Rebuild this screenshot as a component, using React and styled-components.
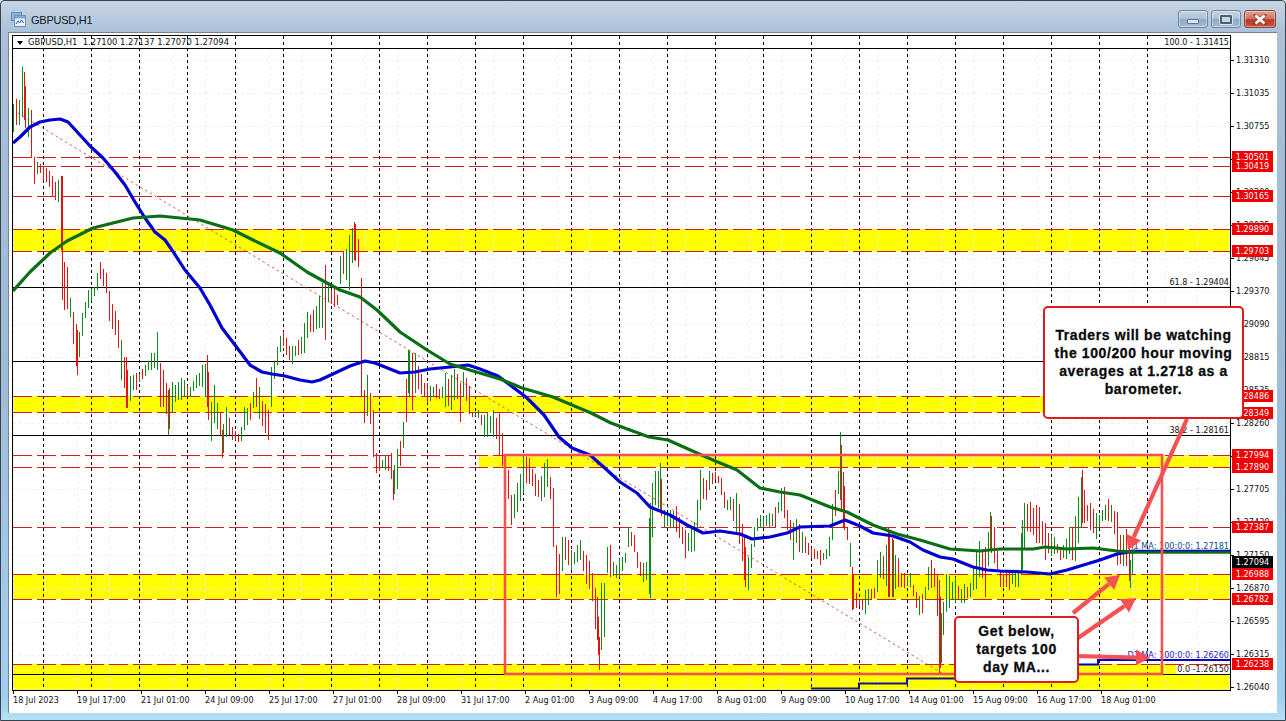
import React from "react";
import styled, { createGlobalStyle } from "styled-components";

const AXIS_FONT = `"DejaVu Sans Condensed", "DejaVu Sans", sans-serif`;

const GlobalStyle = createGlobalStyle`
  html, body { margin: 0; padding: 0; background: #fff; }
  body { font-family: "Liberation Sans", Arial, sans-serif; }
`;

const Window = styled.div`
  box-sizing: border-box;
  width: 1286px;
  height: 721px;
  display: flex;
  flex-direction: column;
  overflow: hidden;
  border: 1px solid #39434d;
  border-radius: 4px 4px 0 0;
  background: linear-gradient(180deg, #c6d5e4 0, #a9c0d8 4.5%, #9fbbd8 50%, #a3cfee 97%, #b5e0f5 100%);
`;

const TitleBar = styled.div`
  box-sizing: border-box;
  flex: 0 0 31px;
  display: flex;
  align-items: flex-start;
  padding: 9px 9px 0 10px;
`;

const TitleIcon = styled.svg`
  width: 15px;
  height: 16px;
  margin-top: 2px;
  flex: none;
`;

const TitleText = styled.span`
  margin: 3px 0 0 5px;
  font-size: 11px;
  line-height: 14px;
  letter-spacing: -0.25px;
  color: #10181f;
`;

const WindowButtons = styled.div`
  margin-left: auto;
  display: flex;
  gap: 3px;
`;

const WinButton = styled.div`
  box-sizing: border-box;
  width: ${(p) => (p.$close ? 32 : 30)}px;
  height: 18px;
  display: flex;
  align-items: center;
  justify-content: center;
  border: 1px solid ${(p) => (p.$close ? "#8a4a40" : "#74879c")};
  border-radius: 3px;
  box-shadow: inset 0 0 0 1px rgba(255, 255, 255, 0.35);
  background: ${(p) =>
    p.$close
      ? "linear-gradient(180deg, #e2a394 0, #cf7a68 45%, #b93a28 55%, #c4553f 100%)"
      : "linear-gradient(180deg, #c3d3e3 0, #adc3d9 45%, #8ea9c6 55%, #a4bdd6 100%)"};
`;

const MinGlyph = styled.span`
  width: 10px;
  height: 3px;
  margin-top: 4px;
  background: #dde6ee;
  border: 1px solid #5f7286;
  border-radius: 1px;
`;

const MaxGlyph = styled.span`
  box-sizing: border-box;
  width: 12px;
  height: 9px;
  background: #c7d5e2;
  border: 2px solid #4d6074;
  border-radius: 1px;
  box-shadow: 0 0 0 1px #dce6ef;
`;

const Client = styled.div`
  flex: 1;
  min-height: 0;
  box-sizing: border-box;
  margin: 0 8px 7px 7px;
  padding: 2px 0 0 3px;
  border-left: 1px solid #76848f;
  border-top: 1px solid #76848f;
  background: #fff;
`;

const ChartGrid = styled.div`
  display: grid;
  grid-template-columns: 1219px 46px;
  grid-template-rows: 656px 18px;
`;

const PlotFrame = styled.div`
  position: relative;
  box-sizing: border-box;
  width: 1219px;
  height: 656px;
  border: 1px solid #000;
`;

const PlotSvg = styled.svg`
  display: block;
  width: 1217px;
  height: 654px;
`;

const Legend = styled.div`
  position: absolute;
  left: 4px;
  top: 0;
  height: 12px;
  display: flex;
  align-items: center;
  font-family: ${AXIS_FONT};
  font-size: 9.3px;
  line-height: 12px;
  white-space: pre;
  color: #111;
`;

const LegendCaret = styled.span`
  width: 0;
  height: 0;
  margin: 1px 5px 0 0;
  border-left: 3.5px solid transparent;
  border-right: 3.5px solid transparent;
  border-top: 4px solid #000;
`;

const PriceAxis = styled.div`
  position: relative;
  display: flex;
  flex-direction: column;
  padding-top: 8.5px;
`;

const PriceTick = styled.div`
  position: relative;
  flex: 0 0 33.03px;
  line-height: 33.03px;
  padding-left: 5px;
  font-family: ${AXIS_FONT};
  font-size: 9px;
  color: #111;
  &::before {
    content: "";
    position: absolute;
    left: 0;
    top: 16px;
    width: 3px;
    height: 1px;
    background: #000;
  }
`;

const PriceBadge = styled.div`
  position: absolute;
  left: 1px;
  top: ${(p) => p.$y - 35 - 6}px;
  width: 41px;
  height: 12px;
  line-height: 12px;
  text-align: center;
  font-family: ${AXIS_FONT};
  font-size: 9px;
  color: #fff;
  background: ${(p) => (p.$dark ? "#000" : "#f00000")};
  z-index: ${(p) => (p.$dark ? 2 : 1)};
`;

const TimeAxis = styled.div`
  grid-column: 1 / 3;
  display: flex;
  padding-left: 1px;
`;

const TimeCell = styled.div`
  position: relative;
  flex: 0 0 64px;
  padding-top: 3px;
  line-height: 12px;
  font-family: ${AXIS_FONT};
  font-size: 9px;
  white-space: nowrap;
  color: #111;
  &::before {
    content: "";
    position: absolute;
    left: 0;
    top: 0;
    width: 1px;
    height: 3px;
    background: #000;
  }
`;

const Callout = styled.div`
  position: absolute;
  z-index: 5;
  left: ${(p) => p.$left}px;
  top: ${(p) => p.$top}px;
  width: ${(p) => p.$width}px;
  height: ${(p) => p.$height}px;
  box-sizing: border-box;
  display: flex;
  align-items: center;
  justify-content: center;
  text-align: center;
  padding-bottom: ${(p) => p.$shift}px;
  border: 2px solid #e01b1b;
  border-radius: 5px;
  background: #fff;
  color: #0a0a0a;
  font-family: "Liberation Sans", Arial, sans-serif;
  font-weight: 700;
  font-size: 14px;
  line-height: 18px;
  letter-spacing: 0.6px;
  -webkit-text-stroke: 0.3px #0a0a0a;
  white-space: nowrap;
`;

/* ---------- chart data (page coordinates) ---------- */

const VERT = Array.from({ length: 24 }, (_, i) => 43.5 + 48 * i);
const FAINT_V = Array.from({ length: 39 }, (_, i) => 13.5 + 32 * i);
const PRICES = ["1.31310","1.31035","1.30755","1.30480","1.30200","1.29925","1.29645","1.29370","1.29090","1.28815","1.28535","1.28260","1.27980","1.27705","1.27430","1.27150","1.26870","1.26595","1.26315","1.26040"];
const FAINT_H = PRICES.map((_, i) => Math.round(60 + i * 33.03) + 0.5);
const BANDS = [[229, 251, 13], [396, 412.5, 13], [455, 467, 479], [574, 599, 13], [664, 690, 13]];
const DASHED = [157, 166, 196, 229, 251, 396, 412.5, 455, 467, 527, 574, 599, 664];
const FIBS = [48, 287, 361, 435, 674];
const BADGES = [
  ["1.30501", 157], ["1.30419", 166], ["1.30165", 196], ["1.29890", 229], ["1.29703", 251],
  ["1.28486", 396], ["1.28349", 412.5], ["1.27994", 455], ["1.27890", 467], ["1.27387", 527],
  ["1.26988", 574], ["1.26782", 599], ["1.26238", 664],
];
const DATES = ["18 Jul 2023","19 Jul 17:00","21 Jul 01:00","24 Jul 09:00","25 Jul 17:00","27 Jul 01:00","28 Jul 09:00","31 Jul 17:00","2 Aug 01:00","3 Aug 09:00","4 Aug 17:00","8 Aug 01:00","9 Aug 09:00","10 Aug 17:00","14 Aug 01:00","15 Aug 09:00","16 Aug 17:00","18 Aug 01:00"];

const ENV = [
  [13,104,132],[15,90,127],[17,108,122],[19,100,125],[22,67,117],[24,72,120],[27,115,143],[29,100,130],[31,110,158],[34,157,184],[36,163,175],[38,160,172],[42,165,180],[46,168,182],[50,172,188],[53,178,200],[55,182,200],[58,180,202],[60,176,200],
  [62,176,300],[64,262,310],[68,268,308],[72,312,340],[74,312,347],[77,330,375],[80,333,348],[83,303,330],[88,290,308],[92,288,298],[96,280,297],[99,260,277],[102,267,283],[106,273,293],[110,297,330],[114,308,330],[118,320,348],[122,347,390],[126,357,408],[128,383,408],[131,373,397],[137,373,388],[144,367,377],[150,353,370],[154,353,368],[157,332,370],[160,363,407],[164,372,407],[168,390,435],[172,382,412],[177,383,400],[182,377,400],[190,387,397],[197,373,387],[203,363,387],[207,355,407],[210,407,447],[214,385,423],[220,412,435],[222,430,458],[226,407,437],[232,427,440],[240,433,444],[244,407,430],[250,403,420],[256,378,407],[260,390,423],[266,407,435],[268,410,440],[271,367,407],[275,360,370],[278,340,363],[282,330,343],[286,338,355],[291,347,365],[298,340,355],[303,327,358],[308,308,333],[314,310,332],[320,293,327],[325,265,340],[328,283,302],[333,287,307],[337,295,305],[341,243,277],[345,253,277],[349,235,290],[354,222,260],[357,228,262],[360,260,278],
  [361,278,397],[364,390,423],[368,370,413],[373,410,457],[376,453,473],[380,457,470],[385,455,470],[392,453,480],[393,470,500],[395,460,488],[398,443,489],[402,437,453],[405,393,437],[408,350,393],[412,353,410],[415,353,393],[420,373,393],[427,383,403],[435,383,397],[440,390,400],[445,373,407],[450,377,413],[455,367,397],[460,383,422],[463,372,397],[468,377,413],[472,412,417],[478,410,418],[483,415,437],[488,413,437],[493,410,437],[497,420,440],[499,412,455],
  [503,440,470],[507,462,490],[511,495,525],[513,497,520],[518,480,510],[524,450,490],[530,460,483],[534,473,495],[540,480,502],[544,463,497],[548,457,483],[553,488,547],[556,545,597],[560,557,593],[563,527,560],[567,537,563],[571,550,570],[576,547,563],[580,540,560],[585,553,583],[590,563,590],[594,583,623],[597,597,640],[599,637,670],[601,583,650],[605,583,633],[607,547,573],[610,545,577],[615,567,578],[620,557,577],[625,553,563],[628,527,547],[633,530,547],[638,557,573],[642,563,582],[646,562,580],[650,503,598],[653,473,507],[660,463,510],[663,510,527],[670,510,527],[675,503,530],[680,520,540],[685,530,558],[690,530,553],[695,520,550],[698,490,520],[700,470,510],[705,483,503],[710,468,487],[715,472,480],[720,473,490],[725,497,513],[730,497,510],[735,490,530],[740,507,547],[744,537,580],[746,557,593],[748,557,590],[752,540,560],[755,520,540],[760,515,528],[770,513,527],[775,507,527],[780,493,510],[783,477,513],[786,507,527],[790,520,540],[793,523,560],[797,517,537],[800,528,560],[805,537,553],[810,547,557],[815,550,560],[820,550,565],[825,553,560],[830,533,555],[833,490,533],[836,490,507],[840,432,500],[843,472,527],[847,527,540],[850,543,567],[852,567,610],[857,600,607],[862,600,610],[866,587,615],[870,590,600],[875,587,597],[878,547,590],[885,553,580],[888,528,597],[893,540,597],[897,553,587],[901,573,587],[905,573,588],[910,573,587],[915,590,605],[918,597,615],[923,593,613],[928,567,590],[932,557,587],[936,572,588],[939,580,673],[941,613,663],[945,573,613],[950,577,607],[955,577,603],[960,590,603],[965,583,603],[970,583,597],[975,553,593],[980,538,573],[985,547,597],[990,512,550],[994,527,563],[1000,570,587],[1010,570,590],[1018,570,587],
  [1022,520,570],[1025,495,537],[1030,502,532],[1035,505,543],[1040,507,543],[1045,523,560],[1050,535,557],[1055,537,553],[1060,547,560],[1065,543,560],[1070,523,553],[1074,522,567],[1078,497,543],[1082,470,523],[1085,500,523],[1090,503,530],[1095,513,543],[1100,515,523],[1107,497,520],[1112,507,523],[1117,512,565],[1122,540,567],[1125,525,563],[1128,537,573],[1130,560,588],[1133,550,567],
];

const BLUE = "13,143 20,137 30,127 40,122 50,120 60,119 68,122 80,135 90,146 103,158 115,172 125,185 135,202 145,218 155,232 165,240 172,250 185,270 200,288 210,305 222,328 235,345 250,365 262,372 272,374 285,376 300,380 312,382 320,380 335,373 350,366 365,361 375,363 390,369 400,373 415,372 430,369 450,367 468,365 480,369 498,376 526,397 544,415 559,437 572,448 590,455 607,470 620,482 637,493 650,507 670,515 687,525 703,533 720,531 740,534 752,539 770,537 787,533 800,527 830,526 845,520 860,526 873,533 893,536 910,542 923,550 940,557 953,559 973,567 987,570 1000,571 1027,572 1050,574 1067,570 1100,560 1117,554 1135,551";
const GREEN = "13,291 30,272 50,253 67,241 93,228 133,218 160,216 200,220 233,230 253,240 280,253 307,272 327,283 340,290 360,297 377,310 400,332 427,350 450,364 473,371 500,379 522,388 553,397 591,413 611,423 649,437 668,440 697,453 713,460 737,470 760,488 780,492 800,495 830,507 847,512 873,525 897,534 920,540 950,549 980,551 1000,549 1033,549 1045,547 1067,549 1093,548 1117,551 1135,552";

/* Tall candles that must stay at their traced place: [x, high, low, green?] */
const SPIKES = [
  [22,67,117,1],[24,72,120,0],[62,176,300,0],[77,330,375,0],[126,357,408,0],[157,332,370,1],[168,390,435,1],[207,355,407,0],
  [222,430,458,0],[271,367,407,1],[325,265,340,0],[349,235,290,1],[354,222,260,0],[361,278,397,0],[373,410,457,0],[393,470,500,0],
  [408,350,393,1],[499,412,455,0],[553,488,547,0],[556,545,597,0],[597,597,640,0],[599,637,670,0],[601,583,650,1],[650,503,598,1],
  [660,463,510,1],[744,537,580,0],[840,432,500,1],[843,472,527,0],[852,567,610,0],[888,528,597,0],[893,540,597,1],[939,580,673,0],
  [941,613,663,1],[990,512,550,1],[1022,520,570,1],[1082,470,523,0],[1117,512,565,0],[1130,560,588,1],
];

const mulberry = (seed) => () => {
  seed |= 0; seed = (seed + 0x6d2b79f5) | 0;
  let t = Math.imul(seed ^ (seed >>> 15), 1 | seed);
  t = (t + Math.imul(t ^ (t >>> 7), 61 | t)) ^ t;
  return ((t ^ (t >>> 14)) >>> 0) / 4294967296;
};

function buildBars() {
  const rnd = mulberry(20230818);
  let red = "", green = "";
  let seg = 0;
  for (let x = 13; x <= 1133; x += 3) {
    while (seg < ENV.length - 2 && ENV[seg + 1][0] < x) seg++;
    const [x0, h0, l0] = ENV[seg];
    const [x1, h1, l1] = ENV[seg + 1];
    const t = Math.max(0, Math.min(1, (x - x0) / (x1 - x0)));
    let hi = h0 + (h1 - h0) * t;
    let lo = l0 + (l1 - l0) * t;
    const near = Math.min(Math.abs(x - x0), Math.abs(x1 - x)) < 1.5;
    const range = lo - hi;
    if (!near) {
      hi += rnd() * range * 0.25;
      lo -= rnd() * range * 0.25;
    }
    const falling = h1 + l1 > h0 + l0;
    const isRed = rnd() < (falling ? 0.92 : 0.08);
    const d = `M${x + 0.5} ${Math.round(hi)}V${Math.round(lo)}`;
    if (isRed) red += d; else green += d;
  }
  SPIKES.forEach(([x, hi, lo, up]) => {
    const d = `M${x + 0.5} ${hi}V${lo}`;
    if (up) green += d; else red += d;
  });
  return { red, green };
}
const BARS = buildBars();

function Arrow({ x1, y1, x2, y2 }) {
  const a = Math.atan2(y2 - y1, x2 - x1);
  const ux = Math.cos(a), uy = Math.sin(a);
  const bx = x2 - ux * 14, by = y2 - uy * 14;
  const px = -uy * 8, py = ux * 8;
  return (
    <g fill="#f45252" stroke="#f45252">
      <line x1={x1} y1={y1} x2={bx} y2={by} strokeWidth="4.2" />
      <polygon stroke="none" points={`${x2},${y2} ${bx + px},${by + py} ${bx - px},${by - py}`} />
    </g>
  );
}

function Chart() {
  return (
    <PlotSvg viewBox="13 36 1217 654">
      {BANDS.map(([a, b, x]) => (
        <rect key={a} x={x} y={a} width={1230 - x} height={b - a} fill="#ffff00" />
      ))}
      <rect x="1176" y="664.5" width="54" height="9.5" fill="#fff" />
      <g stroke="#f2efe6" strokeWidth="1" strokeDasharray="3 3">
        {FAINT_V.map((x) => <line key={x} x1={x} y1="49" x2={x} y2="690" />)}
        {FAINT_H.map((y) => <line key={y} x1="13" y1={y} x2="1230" y2={y} />)}
      </g>
      <g stroke="#000" strokeWidth="1" shapeRendering="crispEdges">
        {FIBS.map((y) => <line key={y} x1="13" y1={y + 0.5} x2="1230" y2={y + 0.5} />)}
        <g strokeDasharray="3 3">
          {VERT.map((x) => <line key={x} x1={x} y1="36" x2={x} y2="690" />)}
        </g>
      </g>
      <g stroke="#cc1f22" strokeWidth="1" strokeDasharray="18.5 5.5" shapeRendering="crispEdges">
        {DASHED.map((y) => <line key={y} x1="13" y1={Math.floor(y) + 0.5} x2="1230" y2={Math.floor(y) + 0.5} />)}
      </g>
      <line x1="18" y1="113" x2="945" y2="675" stroke="#d52a2a" strokeWidth="0.8" strokeDasharray="2.5 3" />
      <g shapeRendering="crispEdges" strokeWidth="1" fill="none">
        <path d={BARS.green} stroke="#0c8a18" />
        <path d={BARS.red} stroke="#e81010" />
      </g>
      <polyline points="1130,551 1230,551" fill="none" stroke="#0000c8" strokeWidth="2.4" />
      <polyline points="1130,552.5 1230,552.5" fill="none" stroke="#0a6e14" strokeWidth="2.4" />
      <polyline points={BLUE} fill="none" stroke="#0000d2" strokeWidth="3.2" strokeLinejoin="round" />
      <polyline points={GREEN} fill="none" stroke="#0a6e14" strokeWidth="3.2" strokeLinejoin="round" />
      <polyline points="811,688.5 859,688.5 859,683.5 907,683.5 907,678.5 955,678.5" fill="none" stroke="#14148c" strokeWidth="2" />
      <polyline points="1000,664.5 1098,664.5 1098,660 1230,660" fill="none" stroke="#0000c0" strokeWidth="2" />
      <g fontFamily={AXIS_FONT} fontSize="9" textAnchor="end">
        <text x="1229" y="45" fill="#111">100.0 - 1.31415</text>
        <text x="1229" y="285" fill="#111">61.8 - 1.29404</text>
        <text x="1229" y="432.5" fill="#111">38.2 - 1.28161</text>
        <text x="1229" y="672" fill="#111">0.0 -1.26150</text>
        <text x="1229" y="549" fill="#0b4a8f">H1 MA: 100:0:0: 1.27181</text>
        <text x="1229" y="658" fill="#2222c0">D1 MA: 100:0:0: 1.26260</text>
      </g>
      <rect x="505" y="455" width="657" height="219" fill="none" stroke="#f45252" strokeWidth="2.6" />
      <Arrow x1={1187} y1={419} x2={1128} y2={550} />
      <Arrow x1={1073} y1={613} x2={1120} y2={575} />
      <Arrow x1={1078} y1={638} x2={1136} y2={598} />
      <Arrow x1={1077} y1={656} x2={1150} y2={658} />
    </PlotSvg>
  );
}

export default function App() {
  return (
    <>
      <GlobalStyle />
      <Window>
        <TitleBar>
          <TitleIcon viewBox="0 0 15 16">
            <rect x="0.5" y="0.5" width="10" height="8" fill="#8fb6dd" stroke="#5f8ab5" />
            <rect x="3.5" y="3.5" width="11" height="11" fill="#e9f2fb" stroke="#6a93bd" />
            <rect x="4" y="4" width="10" height="2.5" fill="#7fa9d3" />
            <path d="M5 12l2-3 1.5 2 2-3 2 3" fill="none" stroke="#355f8c" strokeWidth="1" />
          </TitleIcon>
          <TitleText>GBPUSD,H1</TitleText>
          <WindowButtons>
            <WinButton><MinGlyph /></WinButton>
            <WinButton><MaxGlyph /></WinButton>
            <WinButton $close>
              <svg width="14" height="11" viewBox="0 0 14 11">
                <path d="M2 1l10 9M12 1L2 10" stroke="#6e2a20" strokeWidth="4" strokeLinecap="square" opacity="0.45" />
                <path d="M2.5 1.5l9 8M11.5 1.5l-9 8" stroke="#fff" strokeWidth="2.6" />
              </svg>
            </WinButton>
          </WindowButtons>
        </TitleBar>
        <Client>
          <ChartGrid>
            <PlotFrame>
              <Chart />
              <Legend>
                <LegendCaret />
                {"GBPUSD,H1  1.27100 1.27137 1.27070 1.27094"}
              </Legend>
              <Callout $left={1030} $top={270} $width={201} $height={113} $shift={2}>
                <div>
                  Traders will be watching<br />
                  the 100/200 hour moving<br />
                  averages at 1.2718 as a<br />
                  barometer.
                </div>
              </Callout>
              <Callout $left={941} $top={580} $width={125} $height={67} $shift={2}>
                <div>
                  Get below,<br />
                  targets 100<br />
                  day MA...
                </div>
              </Callout>
            </PlotFrame>
            <PriceAxis>
              {PRICES.map((p) => <PriceTick key={p}>{p}</PriceTick>)}
              {BADGES.map(([label, y]) => <PriceBadge key={label} $y={y}>{label}</PriceBadge>)}
              <PriceBadge $y={562} $dark>1.27094</PriceBadge>
            </PriceAxis>
            <TimeAxis>
              {DATES.map((d) => <TimeCell key={d}>{d}</TimeCell>)}
            </TimeAxis>
          </ChartGrid>
        </Client>
      </Window>
    </>
  );
}
